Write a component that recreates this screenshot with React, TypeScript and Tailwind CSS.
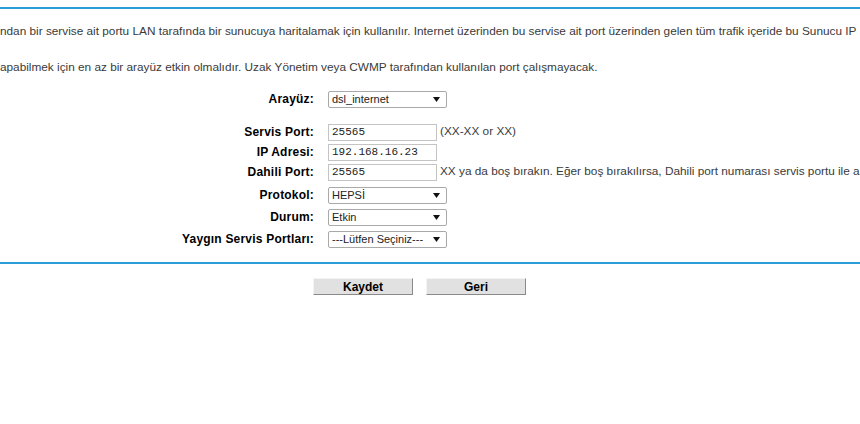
import React from "react"

const Arrow = () => (
    <svg width="7" height="5" viewBox="0 0 7 5" className="shrink-0">
        <path d="M0 0 H7 L3.5 5 Z" fill="#111" />
    </svg>
)

const SelectBox = ({ value }: { value: string }) => (
    <div className="w-[119px] h-[17px] shrink-0 border border-[#a9a9a9] rounded-[2px] bg-white flex items-center justify-between pl-[3px] pr-[6px] text-[11px] text-[#222]">
        <span className="leading-none">{value}</span>
        <Arrow />
    </div>
)

const TextBox = ({ value }: { value: string }) => (
    <input
        readOnly
        value={value}
        className="w-[109px] h-[17px] shrink-0 border border-[#c4c4c4] bg-white px-[3px] text-[11px] text-[#222] outline-none font-['Liberation_Mono',monospace]"
    />
)

const Row = ({ label, h, children }: { label: string; h: string; children: React.ReactNode }) => (
    <div className={`flex items-center ${h}`}>
        <div className="w-[314px] shrink-0 text-right font-bold text-[12px] tracking-[0.2px] text-black">{label}</div>
        <div className="ml-[14px] flex items-center whitespace-nowrap">{children}</div>
    </div>
)

export default function App() {
    return <div className="w-[860px] h-[424px] bg-white overflow-hidden font-['Liberation_Sans',Arial,sans-serif] text-[#3a3a3a]">
        <div className="h-[2px] mt-[7px] bg-[#2b9ed8]"></div>
        <p className="mt-[15px] leading-[14px] text-[11.8px] whitespace-nowrap">ndan bir servise ait portu LAN tarafında bir sunucuya haritalamak için kullanılır. Internet üzerinden bu servise ait port üzerinden gelen tüm trafik içeride bu Sunucu IP</p>
        <p className="mt-[22px] leading-[14px] text-[11.8px] whitespace-nowrap">apabilmek için en az bir arayüz etkin olmalıdır. Uzak Yönetim veya CWMP tarafından kullanılan port çalışmayacak.</p>

        <div className="mt-[15px]">
            <Row label="Arayüz:" h="h-[20px]"><SelectBox value="dsl_internet" /></Row>
            <div className="h-[13px]"></div>
            <Row label="Servis Port:" h="h-[20px]">
                <TextBox value="25565" />
                <span className="ml-[3px] text-[11.8px]">(XX-XX or XX)</span>
            </Row>
            <Row label="IP Adresi:" h="h-[20px]"><TextBox value="192.168.16.23" /></Row>
            <Row label="Dahili Port:" h="h-[20px]">
                <TextBox value="25565" />
                <span className="ml-[3px] text-[11.8px]">XX ya da boş bırakın. Eğer boş bırakılırsa, Dahili port numarası servis portu ile a</span>
            </Row>
            <div className="h-[2px]"></div>
            <Row label="Protokol:" h="h-[22px]"><SelectBox value="HEPSİ" /></Row>
            <Row label="Durum:" h="h-[22px]"><SelectBox value="Etkin" /></Row>
            <Row label="Yaygın Servis Portları:" h="h-[22px]"><SelectBox value="---Lütfen Seçiniz---" /></Row>
        </div>

        <div className="h-[2px] mt-[12px] bg-[#2b9ed8]"></div>

        <div className="mt-[14px] pl-[313px] flex gap-[13px]">
            <button className="w-[100px] h-[17px] bg-[#e1e1e1] border border-t-[#f4f4f4] border-l-[#f4f4f4] border-b-[#8a8a8a] border-r-[#8a8a8a] text-[12px] font-bold text-black leading-none">Kaydet</button>
            <button className="w-[100px] h-[17px] bg-[#e1e1e1] border border-t-[#f4f4f4] border-l-[#f4f4f4] border-b-[#8a8a8a] border-r-[#8a8a8a] text-[12px] font-bold text-black leading-none">Geri</button>
        </div>
    </div>
}
